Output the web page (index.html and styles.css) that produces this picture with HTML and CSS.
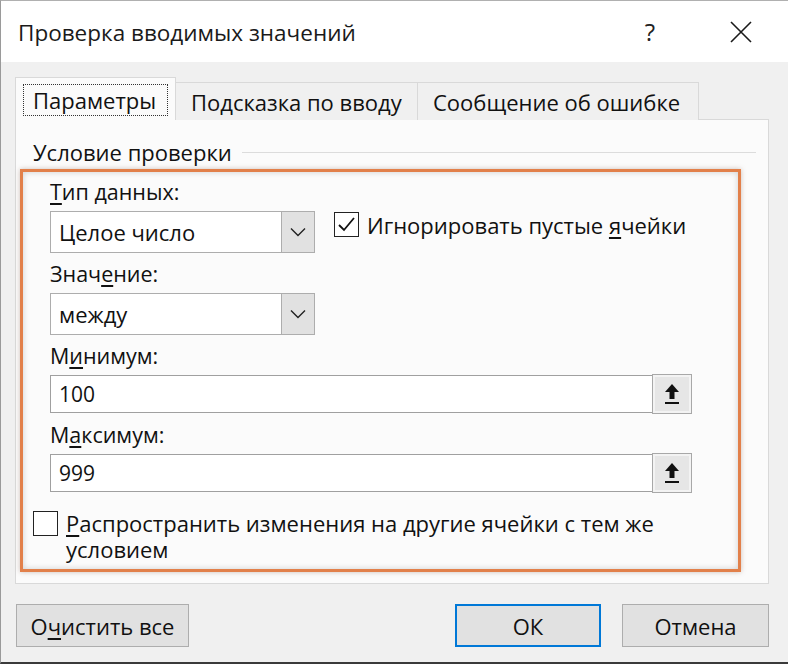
FILE: index.html
```html
<!DOCTYPE html>
<html lang="ru">
<head>
<meta charset="utf-8">
<title>Проверка вводимых значений</title>
<link rel="stylesheet" href="styles.css">
</head>
<body>
<div class="window">
  <div class="titlebar">
    <div class="title">Проверка вводимых значений</div>
    <div class="help">?</div>
    <div class="close">
      <svg width="24" height="24" viewBox="0 0 24 24"><path d="M2 2 L22 22 M22 2 L2 22" stroke="#1a1a1a" stroke-width="1.6" fill="none"/></svg>
    </div>
  </div>
  <div class="body">
    <div class="tabs">
      <div class="tab active"><span class="focus">Параметры</span></div>
      <div class="tab">Подсказка по вводу</div>
      <div class="tab">Сообщение об ошибке</div>
    </div>
    <div class="panel">
      <div class="group-head"><span class="group-title">Условие проверки</span><span class="group-line"></span></div>
      <div class="highlight">
        <div class="fields">
          <div class="label first"><u>Т</u>ип данных:</div>
          <div class="row">
            <div class="combo">
              <div class="combo-value">Целое число</div>
              <div class="combo-btn"><svg width="16" height="10" viewBox="0 0 16 10"><path d="M1 1.5 L8 8.5 L15 1.5" stroke="#222" stroke-width="1.4" fill="none"/></svg></div>
            </div>
            <div class="check checked">
              <span class="box"><svg width="21" height="21" viewBox="0 0 21 21"><path d="M3 11 L8 16 L18 4" stroke="#111" stroke-width="1.8" fill="none"/></svg></span>
              <span class="check-text">Игнорировать пустые <u>я</u>чейки</span>
            </div>
          </div>
          <div class="label">Знач<u>е</u>ние:</div>
          <div class="combo">
            <div class="combo-value">между</div>
            <div class="combo-btn"><svg width="16" height="10" viewBox="0 0 16 10"><path d="M1 1.5 L8 8.5 L15 1.5" stroke="#222" stroke-width="1.4" fill="none"/></svg></div>
          </div>
          <div class="label">М<u>и</u>нимум:</div>
          <div class="ref-input">
            <div class="ref-value">100</div>
            <div class="ref-btn"><svg width="18" height="22" viewBox="0 0 18 22"><path d="M9 1 L16 9 L11.5 9 L11.5 16 L6.5 16 L6.5 9 L2 9 Z" fill="#111"/><rect x="2" y="19" width="14" height="2" fill="#111"/></svg></div>
          </div>
          <div class="label lower">М<u>а</u>ксимум:</div>
          <div class="ref-input">
            <div class="ref-value">999</div>
            <div class="ref-btn"><svg width="18" height="22" viewBox="0 0 18 22"><path d="M9 1 L16 9 L11.5 9 L11.5 16 L6.5 16 L6.5 9 L2 9 Z" fill="#111"/><rect x="2" y="19" width="14" height="2" fill="#111"/></svg></div>
          </div>
        </div>
        <div class="check spread">
          <span class="box"></span>
          <span class="check-text"><u>Р</u>аспространить изменения на другие ячейки с тем же условием</span>
        </div>
      </div>
    </div>
    <div class="buttons">
      <div class="btn clear">О<u>ч</u>истить все</div>
      <div class="spacer"></div>
      <div class="btn ok">ОК</div>
      <div class="btn cancel">Отмена</div>
    </div>
  </div>
</div>
</body>
</html>
```
FILE: styles.css
```css
* { box-sizing: border-box; }
html, body { margin: 0; padding: 0; }
body {
  width: 788px;
  height: 664px;
  overflow: hidden;
  font-family: "Open Sans", "Noto Sans", sans-serif;
  color: #111;
  background: #f0f0f0;
}
u { text-decoration-thickness: 1.5px; text-underline-offset: 3px; }
.window {
  width: 788px;
  height: 664px;
  display: flex;
  flex-direction: column;
  border-left: 1px solid #9a9a9a;
  border-top: 1px solid #b0b0b0;
  border-bottom: 2px solid #3a3a3a;
}
.titlebar {
  height: 61px;
  background: #ffffff;
  display: flex;
  align-items: center;
  padding-left: 17px;
}
.title {
  flex: 1;
  font-size: 22.5px;
  color: #1a1a1a;
  margin-top: 1px;
}
.help {
  font-size: 24px;
  width: 30px;
  text-align: center;
  margin-right: 64px;
  color: #222;
}
.close {
  width: 24px;
  height: 24px;
  margin-right: 35px;
  display: flex;
}
.body {
  flex: 1;
  padding: 15px 19px 0 14px;
  display: flex;
  flex-direction: column;
}
.tabs {
  display: flex;
  align-items: flex-end;
  height: 43px;
  position: relative;
  z-index: 2;
  margin-bottom: -1px;
}
.tab {
  height: 38px;
  border: 1px solid #d9d9d9;
  border-bottom: none;
  background: #f0f0f0;
  font-size: 22px;
  display: flex;
  align-items: center;
  padding: 0 15px;
  margin-left: -1px;
  color: #111;
  white-space: nowrap;
}
.tab:nth-child(2) { width: 243px; }
.tab:nth-child(3) { width: 282px; }
.tab.active {
  height: 43px;
  width: 161px;
  margin-left: 0;
  background: #fbfbfb;
  padding: 0 7px;
  border-color: #d9d9d9;
  position: relative;
  z-index: 3;
}
.focus {
  border: 1.5px dotted #333;
  padding: 0 9px;
  height: 32px;
  display: flex;
  align-items: center;
  margin-top: 1px;
  width: 145px;
}
.panel {
  height: 465px;
  background: #fbfbfb;
  border: 1px solid #d9d9d9;
  padding: 19px 0 0 0;
  display: flex;
  flex-direction: column;
}
.group-head {
  display: flex;
  align-items: center;
  height: 26px;
  margin-left: 17px;
  margin-right: 12px;
}
.group-title {
  font-size: 22px;
  white-space: nowrap;
  padding-right: 10px;
}
.group-line {
  flex: 1;
  height: 1px;
  background: #dcdcdc;
}
.highlight {
  margin: 4px 27px 0 4px;
  height: 403px;
  border: 3px solid #e2804a;
  box-shadow: 0 0 5px rgba(120, 80, 60, 0.35), inset 0 0 6px rgba(0,0,0,0.18);
  padding: 8px 10px 0 10px;
}
.fields {
  margin-left: 17px;
}
.label {
  font-size: 21.5px;
  line-height: 24px;
  margin: 9px 0 7px 0;
}
.label.first { margin-top: 0; }
.label.lower { margin-top: 10px; }
.row {
  display: flex;
  align-items: flex-start;
  gap: 19px;
}
.combo {
  width: 265px;
  height: 42px;
  display: flex;
  border: 1px solid #adadad;
  background: #fff;
  flex: none;
}
.combo-value {
  flex: 1;
  font-size: 22px;
  display: flex;
  align-items: center;
  padding-left: 8px;
}
.combo-btn {
  width: 33px;
  background: #e1e1e1;
  border-left: 1px solid #adadad;
  display: flex;
  align-items: center;
  justify-content: center;
}
.check {
  display: flex;
  align-items: flex-start;
  font-size: 22px;
}
.check .box {
  width: 25px;
  height: 25px;
  border: 1.5px solid #222;
  background: #fff;
  flex: none;
  display: flex;
  align-items: center;
  justify-content: center;
}
.check.checked { margin-top: 1px; white-space: nowrap; }
.check.checked .check-text { margin-left: 8px; line-height: 25px; margin-top: 1px; }
.ref-input {
  width: 642px;
  height: 38px;
  display: flex;
  border: 1px solid #a0a0a0;
  background: #fff;
}
.ref-value {
  flex: 1;
  font-size: 21px;
  display: flex;
  align-items: center;
  padding-left: 8px;
}
.ref-btn {
  width: 40px;
  margin: -2px -1px -2px 0;
  background: #e6e6e6;
  border: 1px solid #a8a8a8;
  box-shadow: inset 0 0 0 2px #f3f3f3;
  display: flex;
  align-items: center;
  justify-content: center;
}
.check.spread {
  margin-top: 19px;
}
.check.spread .check-text {
  margin-left: 8px;
  line-height: 26px;
  margin-top: -1px;
  width: 610px;
}
.buttons {
  display: flex;
  margin-top: 20px;
  height: 43px;
  margin-left: 1px;
}
.btn {
  height: 43px;
  border: 1px solid #adadad;
  background: #e1e1e1;
  font-size: 22px;
  display: flex;
  align-items: center;
  justify-content: center;
}
.btn.clear { width: 173px; }
.spacer { flex: 1; }
.btn.ok { width: 146px; border: 2px solid #0078d7; }
.btn.cancel { width: 147px; margin-left: 21px; }
```
